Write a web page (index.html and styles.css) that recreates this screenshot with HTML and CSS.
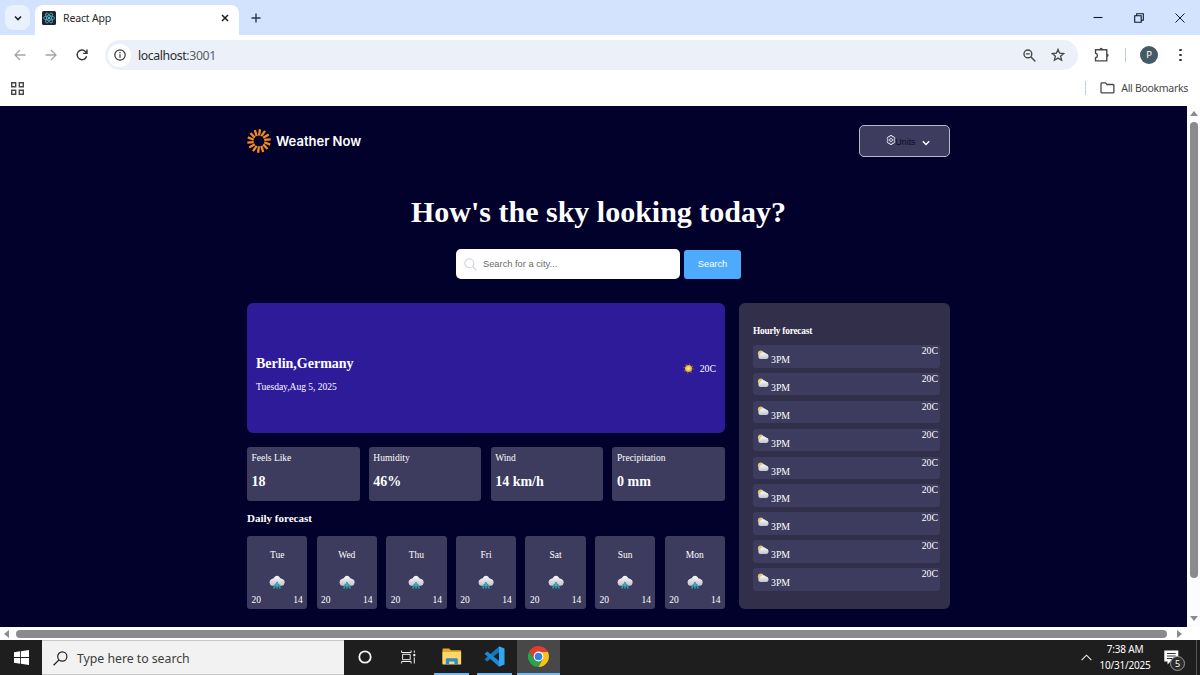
FILE: index.html
```html
<!DOCTYPE html>
<html lang="en">
<head>
    <meta charset="UTF-8">
    <title>React App</title>
    <meta content="width=device-width, initial-scale=1" name="viewport">
    <link rel="stylesheet" href="styles.css">
</head>
<body>
<svg class="defs" width="0" height="0">
    <defs>
        <linearGradient id="cloudFill" x1="0" y1="0" x2="0" y2="1">
            <stop offset="0" stop-color="#fafafc"/>
            <stop offset="1" stop-color="#c4c2cc"/>
        </linearGradient>
        <radialGradient id="sunFill">
            <stop offset="0" stop-color="#fff3a0"/>
            <stop offset="1" stop-color="#dca420"/>
        </radialGradient>
        <symbol id="rain" viewBox="0 0 18 15">
            <path d="M4 10.800A3.600 3.600 0 0 1 3.600 4.100Q6 3.500 7 1.500 9 0 11 1.500 12 3.500 14.400 4.100A3.500 3.500 0 0 1 14 10.800z" fill="url(#cloudFill)"/>
            <path d="M9 7.500v1.500M7.500 9.500L6 12.800M10.500 9.500L12 12.800M9 11v1.800" stroke="#2f9aad" stroke-width="1.700" stroke-linecap="round" fill="none"/>
        </symbol>
        <symbol id="partly" viewBox="0 0 12 10">
            <circle cx="3.800" cy="3.500" r="2.900" fill="#d9c878"/>
            <path d="M3.300 9.100A2.500 2.500 0 0 1 2.800 4.400 3.700 3.700 0 0 1 9 3.600 2.800 2.800 0 0 1 9.500 9.100z" fill="url(#cloudFill)"/>
        </symbol>
    </defs>
</svg>
<div class="tabs">
    <div class="tab-search">
        <svg width="10" height="10" viewBox="0 0 10 10"><path d="M2 3.500l3 3 3-3" fill="none" stroke="#1f1f1f" stroke-width="1.600"/></svg>
    </div>
    <div class="tab">
        <svg class="favicon" width="14" height="14" viewBox="0 0 14 14">
            <rect width="14" height="14" rx="1.500" fill="#20232a"/>
            <g fill="none" stroke="#4fb4cc" stroke-width=".8">
                <ellipse cx="7" cy="7" rx="5.600" ry="2.200"/>
                <ellipse cx="7" cy="7" rx="5.600" ry="2.200" transform="rotate(60 7 7)"/>
                <ellipse cx="7" cy="7" rx="5.600" ry="2.200" transform="rotate(120 7 7)"/>
            </g>
            <circle cx="7" cy="7" r="1.100" fill="#61dafb"/>
        </svg>
        <span class="tab-title">React App</span>
        <svg class="tab-close" width="8" height="8" viewBox="0 0 8 8"><path d="M1 1l6 6M7 1L1 7" stroke="#1f1f1f" stroke-width="1.500"/></svg>
    </div>
    <svg class="new-tab" width="10" height="10" viewBox="0 0 10 10"><path d="M5 .5v9M.5 5h9" stroke="#2b3550" stroke-width="1.400"/></svg>
    <div class="window-buttons">
        <svg width="10" height="10" viewBox="0 0 10 10"><path d="M.5 4.500h9" stroke="#111827" stroke-width="1.100"/></svg>
        <svg width="10" height="10" viewBox="0 0 10 10"><path d="M.7 2.800h6.500v6.500H.7zM2.700 2.800V.7h6.600v6.600H7.200" fill="none" stroke="#111827" stroke-width="1.100"/></svg>
        <svg width="10" height="10" viewBox="0 0 10 10"><path d="M.5.5l9 9M9.500.5l-9 9" stroke="#111827" stroke-width="1"/></svg>
    </div>
</div>
<div class="toolbar">
    <div class="nav">
        <svg width="12" height="12" viewBox="0 0 12 12"><path d="M11.500 6H1.200M6 1L1 6l5 5" fill="none" stroke="#a3a5a8" stroke-width="1.300"/></svg>
        <svg width="12" height="12" viewBox="0 0 12 12"><path d="M.5 6h10.300M6 1l5 5-5 5" fill="none" stroke="#a3a5a8" stroke-width="1.300"/></svg>
        <svg width="12" height="12" viewBox="0 0 12 12"><path d="M10.600 7.200A4.800 4.800 0 1 1 9.600 2.700l1 1.100M11 .6v3.800H7.200" fill="none" stroke="#35373a" stroke-width="1.400"/></svg>
    </div>
    <div class="address">
        <div class="info">
            <svg width="12" height="12" viewBox="0 0 12 12"><circle cx="6" cy="6" r="5.200" fill="none" stroke="#35373a" stroke-width="1.200"/><path d="M6 5.300v3.400M6 3.100v1.200" stroke="#35373a" stroke-width="1.200"/></svg>
        </div>
        <span class="url">localhost<span>:3001</span></span>
        <svg class="zoom-icon" width="13" height="13" viewBox="0 0 13 13"><circle cx="4.900" cy="4.900" r="3.900" fill="none" stroke="#474747" stroke-width="1.400"/><path d="M7.800 7.800l4.600 4.600M3 4.900h3.800" stroke="#474747" stroke-width="1.400"/></svg>
        <svg width="14" height="14" viewBox="0 0 14 14"><path d="M7 1.400l1.600 3.800 4.100.3-3.100 2.700 1 4L7 10.100l-3.600 2.100 1-4-3.100-2.700 4.100-.3z" fill="none" stroke="#474747" stroke-width="1.300"/></svg>
    </div>
    <svg class="puzzle" width="16" height="16" viewBox="0 0 16 16"><path d="M1.500 2.700h11.300v11.200H1.500v-3.200c2.600-.4 2.600-4 0-4.400z" fill="none" stroke="#474747" stroke-width="1.400" stroke-linejoin="round"/><path d="M5.600 2.300a1.600 1.600 0 0 1 3.200 0zM13 6.700a1.600 1.600 0 0 1 0 3.300z" fill="#474747"/></svg>
    <i class="divider"></i>
    <div class="avatar">P</div>
    <div class="dots"><i></i><i></i><i></i></div>
</div>
<div class="bookmarks">
    <svg width="13" height="13" viewBox="0 0 13 13"><path d="M.7.7h4v4h-4zM8.300.7h4v4h-4zM.7 8.300h4v4h-4zM8.300 8.300h4v4h-4z" fill="none" stroke="#474747" stroke-width="1.400"/></svg>
    <i class="divider"></i>
    <svg class="folder" width="15" height="12" viewBox="0 0 15 12"><path d="M1 10V1.700q0-.8.8-.8h3.600L7 2.500h6q.9 0 .9.9V10q0 .9-.9.9H1.900Q1 10.900 1 10z" fill="none" stroke="#474747" stroke-width="1.300"/></svg>
    <span>All Bookmarks</span>
</div>

<div class="viewport">
    <div class="page">
        <div class="container">
            <header>
                <div class="logo">
                    <svg id="logoSun" width="24" height="24" viewBox="-12 -12 24 24"></svg>
                    <span>Weather Now</span>
                </div>
                <button class="units">
                    <svg class="gear" width="10" height="10" viewBox="0 0 10 10"><path d="M4 .6h2l.4 1.300 1.400-.2 1 1.700-.9 1.600.9 1.600-1 1.700-1.400-.2L6 9.400H4l-.4-1.300-1.400.2-1-1.700.9-1.600-.9-1.600 1-1.700 1.400.2z" fill="none" stroke="#eceaf4" stroke-width="1"/><circle cx="5" cy="5" r="1.500" fill="none" stroke="#eceaf4" stroke-width=".9"/></svg>
                    <span>Units</span>
                    <svg class="arrow" width="8" height="6" viewBox="0 0 8 6"><path d="M.8 1.200L4 4.400l3.200-3.200" fill="none" stroke="#fff" stroke-width="1.400"/></svg>
                </button>
            </header>
            <h1>How's the sky looking today?</h1>
            <div class="search">
                <div class="search-input">
                    <svg width="13" height="13" viewBox="0 0 13 13"><circle cx="5.300" cy="5.300" r="4.500" fill="none" stroke="#d2d0dc" stroke-width="1.100"/><path d="M8.600 8.600l3.800 3.800" stroke="#d2d0dc" stroke-width="1.200"/></svg>
                    <span>Search for a city...</span>
                </div>
                <button class="search-btn">Search</button>
            </div>
            <main>
                <div class="left">
                    <section class="current">
                        <div>
                            <h2>Berlin,Germany</h2>
                            <p>Tuesday,Aug 5, 2025</p>
                        </div>
                        <div class="temp">
                            <svg width="11" height="11" viewBox="0 0 12 12"><circle cx="6" cy="6" r="4.900" fill="none" stroke="#a9703f" stroke-width="1.200" stroke-dasharray="1.200 2.650"/><circle cx="6" cy="6" r="3.900" fill="url(#sunFill)"/></svg>
                            <span>20C</span>
                        </div>
                    </section>
                    <section class="stats">
                        <div class="stat"><p>Feels Like</p><h3>18</h3></div>
                        <div class="stat"><p>Humidity</p><h3>46%</h3></div>
                        <div class="stat"><p>Wind</p><h3>14 km/h</h3></div>
                        <div class="stat"><p>Precipitation</p><h3>0 mm</h3></div>
                    </section>
                    <h4>Daily forecast</h4>
                    <section class="daily" id="daily"></section>
                </div>
                <aside class="hourly">
                    <h5>Hourly forecast</h5>
                    <div id="hourly"></div>
                </aside>
            </main>
        </div>
    </div>
    <div class="scroll-y">
        <svg width="8" height="5" viewBox="0 0 8 5"><path d="M0 5l4-5 4 5z"/></svg>
        <div class="thumb"></div>
        <svg width="8" height="5" viewBox="0 0 8 5"><path d="M0 0l4 5 4-5z"/></svg>
    </div>
</div>
<div class="scroll-x">
    <svg width="5" height="8" viewBox="0 0 5 8"><path d="M5 0L0 4l5 4z"/></svg>
    <div class="thumb"></div>
    <svg width="5" height="8" viewBox="0 0 5 8"><path d="M0 0l5 4-5 4z"/></svg>
</div>

<div class="taskbar">
    <div class="start">
        <svg width="15" height="15" viewBox="0 0 15 15"><path d="M0 2.200l6.200-.9v5.800H0zM7 1.200L15 0v7.100H7zM0 7.900h6.200v5.800L0 12.800zM7 7.900h8V15l-8-1.200z" fill="#fff"/></svg>
    </div>
    <div class="task-search">
        <svg width="15" height="15" viewBox="0 0 15 15"><circle cx="9.300" cy="5.500" r="4.600" fill="none" stroke="#222" stroke-width="1.200"/><path d="M6 8.900L.6 14.300" stroke="#222" stroke-width="1.300"/></svg>
        <span>Type here to search</span>
    </div>
    <div class="task">
        <svg width="14" height="14" viewBox="0 0 14 14"><circle cx="7" cy="7" r="5.700" fill="none" stroke="#f4f4f4" stroke-width="1.800"/></svg>
    </div>
    <div class="task">
        <svg width="15" height="14" viewBox="0 0 15 14"><path d="M.6.5v2h9.500v-2M.6 13.500v-2h9.500v2M1.600 4.300h7.600v5.400H1.600zM13.300.5v2.300M13.300 7.500v6" fill="none" stroke="#eee" stroke-width="1"/><path d="M12.300 4h2v2.200h-2z" fill="#fff"/></svg>
    </div>
    <div class="task open">
        <svg width="20" height="17" viewBox="0 0 20 17"><path d="M.5 1.200Q.5.500 1.200.500h6l1.600 1.700h9.500q.8 0 .8.800v12.600H.5z" fill="#e8a823"/><path d="M.5 4h18.600v12.500H.5z" fill="#ffd766"/><path d="M3.800 16.500v-5.200q0-1.100 1.100-1.100h9.800q1.100 0 1.100 1.100v5.200h-3.300v-3H7.100v3z" fill="#2f8ad0"/></svg>
    </div>
    <div class="task open">
        <svg width="21" height="21" viewBox="0 0 21 21"><path d="M15.200.3v5.600L3.300 15.600 1.100 14q-.6-.6 0-1.200z" fill="#1277bd"/><path d="M15.200 20.700v-5.600L3.300 5.400 1.100 7q-.6.600 0 1.200z" fill="#1b8ad3"/><path d="M15 .2L20.500 2.600v15.800L15 20.800z" fill="#2fa7f2"/></svg>
    </div>
    <div class="task open active">
        <svg width="21" height="21" viewBox="0 0 42 42"><path d="M2.800 10.500L12.700 25.800 21 30.500 29.300 25.800 21 42A21 21 0 0 1 2.800 10.500z" fill="#2ba24c"/><path d="M21 11.500h18.700A21 21 0 0 1 21 42l8.300-16.200z" fill="#fbc116"/><path d="M2.800 10.500A21 21 0 0 1 39.700 11.500H21L12.700 25.800z" fill="#e33b2e"/><circle cx="21" cy="21" r="9.800" fill="#fff"/><circle cx="21" cy="21" r="7.600" fill="#3c7ee8"/></svg>
    </div>
    <div class="tray">
        <svg width="11" height="7" viewBox="0 0 11 7"><path d="M.6 6.200l4.900-5 4.900 5" fill="none" stroke="#eee" stroke-width="1.100"/></svg>
        <div class="clock"><div>7:38 AM</div><div>10/31/2025</div></div>
        <div class="notify">
            <svg width="15" height="15" viewBox="0 0 15 15"><path d="M.3.500h14v11H6.500L3.500 14.500v-3H.3z" fill="#fff"/><path d="M3 3.500h8.700M3 6h8.700M3 8.500h6" stroke="#333" stroke-width="1"/></svg>
            <span class="badge">5</span>
        </div>
    </div>
</div>
<script>
    var days = ['Tue', 'Wed', 'Thu', 'Fri', 'Sat', 'Sun', 'Mon'];
    var daily = document.getElementById('daily');
    var hourly = document.getElementById('hourly');
    var logoSun = document.getElementById('logoSun');
    var html = '';

    for (var i = 0; i < days.length; i++) {
        html += '<div class="day"><p>' + days[i] + '</p>' +
            '<svg width="18" height="15"><use href="#rain"/></svg>' +
            '<div class="range"><span>20</span><span>14</span></div></div>';
    }
    daily.innerHTML = html;

    html = '';
    for (i = 0; i < 9; i++) {
        html += '<div class="hour"><svg width="12" height="10"><use href="#partly"/></svg>' +
            '<span class="time">3PM</span><span class="degree">20C</span></div>';
    }
    hourly.innerHTML = html;

    html = '';
    for (i = 0; i < 14; i++) {
        html += '<path d="M0-5.400L1-11.700" transform="rotate(' + i * 360 / 14 + ')" stroke="#f58a1f" stroke-width="2.300"/>';
    }
    logoSun.innerHTML = html;
</script>
</body>
</html>
```
FILE: styles.css
```css
* {
    box-sizing: border-box;
}

body {
    margin: 0;
    width: 1200px;
    height: 675px;
    overflow: hidden;
    background-color: #fff;
    font-family: "Noto Sans", sans-serif;
}

svg {
    display: block;
    flex-shrink: 0;
}

.defs {
    position: absolute;
}

h1, h2, h3, h4, h5, p {
    margin: 0;
}

button {
    border: 0;
    padding: 0;
    font-family: "Liberation Sans", sans-serif;
}

/* browser */
.tabs {
    height: 35px;
    display: flex;
    align-items: center;
    background-color: #d3e2fd;
    padding-left: 5px;
}

.tab-search {
    width: 25px;
    height: 25px;
    border-radius: 8px;
    background-color: #e9f1fe;
    display: flex;
    align-items: center;
    justify-content: center;
}

.tab {
    width: 204px;
    height: 30px;
    margin: 5px 0 0 5px;
    padding: 0 10px 4px 7px;
    border-radius: 8px 8px 0 0;
    background-color: #fff;
    display: flex;
    align-items: center;
}

.tab-title {
    font-size: 10.5px;
    letter-spacing: -.15px;
    margin-left: 7px;
    color: #2a2a2a;
}

.tab-close {
    margin-left: auto;
}

.new-tab {
    margin-left: 12px;
}

.window-buttons {
    display: flex;
    gap: 31px;
    margin: 0 15px 0 auto;
}

.toolbar {
    height: 40px;
    display: flex;
    align-items: center;
    padding-left: 14px;
}

.nav {
    display: flex;
    gap: 19px;
}

.address {
    width: 973px;
    height: 30px;
    margin-left: 17px;
    padding: 0 13px 0 3px;
    border-radius: 15px;
    background-color: #ecf0f9;
    display: flex;
    align-items: center;
}

.info {
    width: 23px;
    height: 23px;
    border-radius: 50%;
    background-color: #fff;
    display: flex;
    align-items: center;
    justify-content: center;
}

.url {
    margin-left: 7px;
    font-size: 12.3px;
    color: #2b2b2b;
    letter-spacing: -.4px;
}

.url span {
    color: #5b5e63;
}

.zoom-icon {
    margin: 0 15px 0 auto;
}

.puzzle {
    margin-left: 16px;
}

.divider {
    width: 1px;
    height: 14px;
    background-color: #b9cdf5;
}

.toolbar .divider {
    margin-left: 15px;
}

.avatar {
    width: 18px;
    height: 18px;
    margin-left: 14px;
    border-radius: 50%;
    background-color: #455a64;
    color: #fff;
    font-size: 9.5px;
    line-height: 18px;
    text-align: center;
}

.dots {
    display: flex;
    flex-direction: column;
    gap: 2.5px;
    margin-left: 21px;
}

.dots i {
    width: 2.5px;
    height: 2.5px;
    border-radius: 50%;
    background-color: #35373a;
}

.bookmarks {
    height: 31px;
    display: flex;
    align-items: center;
    padding: 0 12px 5px 11px;
    font-size: 10.5px;
    letter-spacing: -.3px;
    color: #474747;
}

.bookmarks .divider {
    margin-left: auto;
}

.folder {
    margin: 0 6px 0 14px;
}

.viewport {
    height: 521px;
    display: flex;
}

.scroll-y {
    width: 13px;
    padding: 5px 0 6px;
    background-color: #fcfcfc;
    display: flex;
    flex-direction: column;
    align-items: center;
}

.scroll-y svg, .scroll-x svg {
    fill: #8b8b8b;
}

.scroll-y .thumb {
    width: 8px;
    height: 456px;
    border-radius: 4px;
    background-color: #8b8b8b;
    margin: 6px 0 auto;
}

.scroll-x {
    height: 13px;
    width: 1187px;
    padding: 0 5px 0 4px;
    display: flex;
    align-items: center;
    justify-content: space-between;
}

.scroll-x .thumb {
    width: 1151px;
    height: 8px;
    border-radius: 4px;
    background-color: #8b8b8b;
    margin: 0 auto 0 7px;
}

/* weather page */
.page {
    width: 1187px;
    padding: 19px 0 0 247px;
    background-color: #02012c;
    font-family: "Liberation Serif", serif;
    color: #fff;
}

.container {
    width: 703px;
}

header {
    height: 32px;
    display: flex;
    align-items: center;
    justify-content: space-between;
}

.logo {
    display: flex;
    align-items: center;
    gap: 5px;
    font-family: Inter, sans-serif;
    font-weight: 600;
    font-size: 13px;
}

.units {
    width: 91px;
    height: 32px;
    display: flex;
    align-items: center;
    justify-content: center;
    padding-left: 7px;
    border: 1px solid #b9b8cb;
    border-radius: 5px;
    background-color: #3d3b5e;
    font-size: 8.7px;
    color: #0b0a20;
}

.gear {
    margin-top: -2px;
}

.units span {
    margin-top: 2px;
}

.arrow {
    margin: 3px 0 0 7px;
}

h1 {
    margin-top: 37px;
    font-size: 30px;
    line-height: 36px;
    text-align: center;
}

.search {
    display: flex;
    align-items: center;
    justify-content: center;
    gap: 4px;
    margin-top: 19px;
    font-family: "Liberation Sans", sans-serif;
}

.search-input {
    width: 224px;
    height: 30px;
    border-radius: 5px;
    background-color: #fff;
    display: flex;
    align-items: center;
    gap: 6px;
    padding-left: 8px;
    font-size: 9.3px;
    color: #6c6c6c;
}

.search-btn {
    width: 57px;
    height: 29px;
    border-radius: 3px;
    background-color: #4daafc;
    color: #fff;
    font-size: 9.3px;
}

main {
    display: flex;
    gap: 14px;
    margin-top: 24px;
}

.left {
    width: 478px;
}

.current {
    height: 130px;
    padding: 0 9px;
    border-radius: 6px;
    background-color: #2d1b9a;
    display: flex;
    align-items: center;
    justify-content: space-between;
    font-size: 9.5px;
}

.current h2 {
    font-size: 14px;
    line-height: 16px;
    margin: 11px 0 10px;
}

.temp {
    display: flex;
    align-items: center;
    gap: 6px;
    font-size: 9.8px;
}

.stats {
    display: grid;
    grid-template-columns: repeat(4, 1fr);
    gap: 9.3px;
    margin-top: 14px;
}

.stat {
    height: 54px;
    padding: 5px 4.5px;
    border-radius: 3px;
    background-color: #3d3b5e;
    font-size: 9.5px;
    line-height: 12px;
}

.stat h3 {
    font-size: 14px;
    line-height: 16px;
    margin-top: 10px;
}

h4 {
    font-size: 11px;
    line-height: 13px;
    margin-top: 11px;
}

.daily {
    display: grid;
    grid-template-columns: repeat(7, 1fr);
    gap: 9.3px;
    margin-top: 11px;
}

.day {
    height: 73px;
    padding: 13px 4.5px 3px;
    border-radius: 3px;
    background-color: #3d3b5e;
    display: flex;
    flex-direction: column;
    align-items: center;
    font-size: 9.5px;
    line-height: 12px;
}

.day svg {
    margin-top: 14px;
}

.range {
    width: 100%;
    margin-top: auto;
    display: flex;
    justify-content: space-between;
}

.hourly {
    width: 211px;
    height: 306px;
    padding: 23px 10px 0 14px;
    border-radius: 6px;
    background-color: #322f4b;
}

.hourly h5 {
    font-size: 9.3px;
    line-height: 11px;
    letter-spacing: -.2px;
    margin-bottom: 8px;
}

.hour {
    height: 22.5px;
    margin-bottom: 5.4px;
    padding: 0 2px 0 4px;
    border-radius: 3px;
    background-color: #3d3b5e;
    display: flex;
    font-size: 9.8px;
    line-height: 12px;
}

.hour svg {
    margin-top: 5px;
}

.time {
    margin: 9px 0 0 2px;
}

.degree {
    margin: 0 0 0 auto;
}

/* taskbar */
.taskbar {
    height: 35px;
    display: flex;
    background-color: #1e1e1e;
    color: #fff;
}

.start {
    width: 42px;
    display: flex;
    align-items: center;
    justify-content: center;
}

.task-search {
    width: 302px;
    padding: 1px 0 0 11px;
    border: 1px solid #c8c8c8;
    border-width: 1px 0;
    background-color: #f2f2f2;
    display: flex;
    align-items: center;
    gap: 9px;
    font-size: 12.3px;
    letter-spacing: -.03px;
    color: #3c3c3c;
}

.task {
    width: 42px;
    margin-right: 1px;
    display: flex;
    align-items: center;
    justify-content: center;
    border-bottom: 2px solid transparent;
}

.task.open {
    width: 35px;
    margin: 0 4px;
    border-color: #76b9ed;
}

.task.active {
    width: 43px;
    margin: 0 0 0 1px;
    background-color: #484848;
}

.tray {
    margin-left: auto;
    padding-right: 7px;
    border-right: 1px solid #555;
    margin-right: 3px;
    display: flex;
    align-items: center;
}

.clock {
    width: 66px;
    text-align: center;
    font-size: 10px;
    line-height: 15.5px;
    letter-spacing: -.2px;
}

.notify {
    position: relative;
    width: 31px;
    padding-left: 6px;
}

.badge {
    position: absolute;
    left: 12px;
    top: 6px;
    width: 15px;
    height: 15px;
    border: 1px solid #999;
    border-radius: 50%;
    background-color: #2d2d2d;
    font-size: 9px;
    line-height: 13px;
    text-align: center;
}
```
